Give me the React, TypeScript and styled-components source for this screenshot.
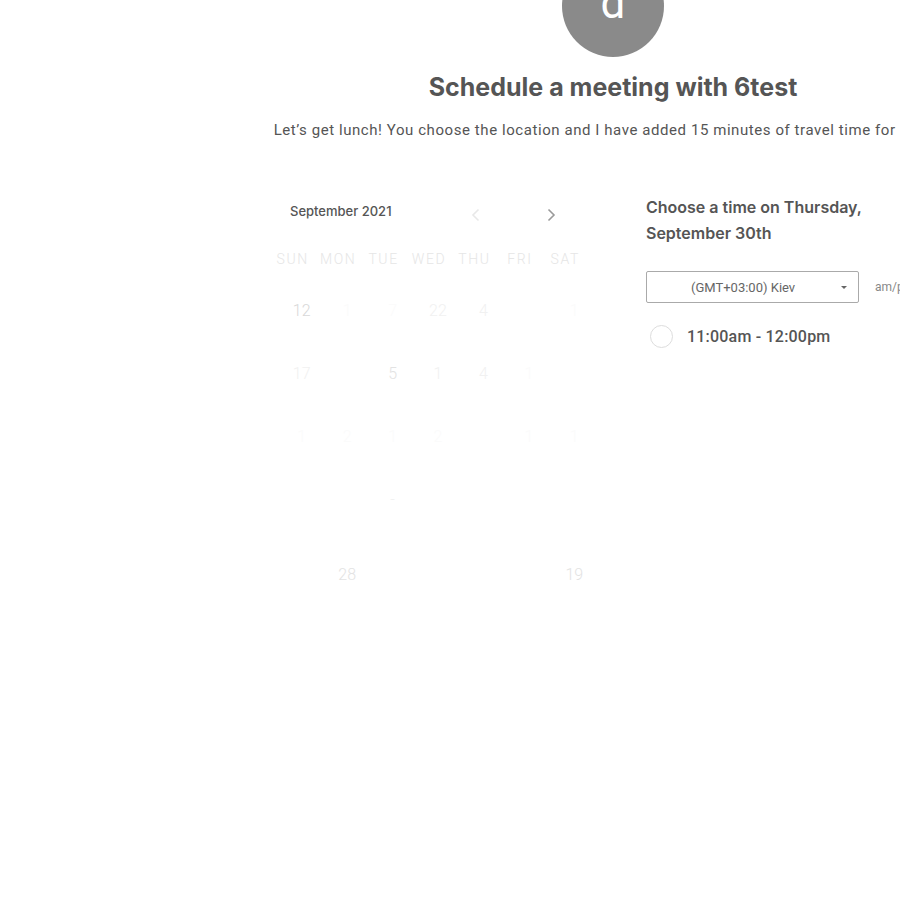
import React from "react";
import styled, { createGlobalStyle } from "styled-components";

const Global = createGlobalStyle`
  html, body { margin: 0; padding: 0; background: #fff; overflow: hidden; }
  body { font-family: Roboto, "Liberation Sans", sans-serif; color: #555; }
`;

const Page = styled.div`
  width: 900px;
  height: 900px;
  overflow: hidden;
  padding-left: 270px;
  box-sizing: border-box;
`;

const Container = styled.div`
  width: 686px;
  display: flex;
  flex-direction: column;
  align-items: center;
`;

const Avatar = styled.div`
  width: 102px;
  height: 102px;
  border-radius: 50%;
  background: #8a8a8a;
  margin-top: -45px;
  display: flex;
  align-items: center;
  justify-content: center;
  color: #fff;
  font-family: Roboto, sans-serif;
  font-size: 44px;
  line-height: 1;
`;

const AvatarLetter = styled.span`
  transform: translateY(-3px);
`;

const Title = styled.h1`
  margin: 15px 0 0;
  font-family: Inter, Roboto, sans-serif;
  font-weight: 700;
  font-size: 25px;
  line-height: 30px;
  color: #555;
`;

const Subtitle = styled.p`
  margin: 18px 0 0;
  white-space: nowrap;
  font-size: 15px;
  letter-spacing: 0.57px;
  line-height: 20px;
  color: #555;
  text-align: center;
`;

const Body = styled.div`
  align-self: stretch;
  display: flex;
  margin-top: 55px;
`;

const Calendar = styled.div`
  width: 318px;
  flex: none;
  padding-top: 4px;
`;

const MonthBar = styled.div`
  display: flex;
  align-items: center;
  padding-left: 20px;
  height: 24px;
`;

const MonthLabel = styled.div`
  flex: none;
  font-family: Inter, Roboto, sans-serif;
  font-size: 13px;
  font-weight: 500;
  color: #555;
  width: 176px;
`;

const NavButton = styled.button<{ $faded?: boolean }>`
  flex: none;
  border: 0;
  background: none;
  padding: 0;
  width: 20px;
  height: 20px;
  margin-top: 8px;
  display: flex;
  align-items: center;
  justify-content: center;
  color: ${(p) => (p.$faded ? "#e8e8e8" : "#9a9a9a")};
  margin-right: ${(p) => (p.$faded ? "55px" : "0")};
`;

const WeekHeader = styled.div`
  display: grid;
  grid-template-columns: repeat(7, 1fr);
  margin-top: 26px;
  height: 20px;
  align-items: center;
`;

const WeekDay = styled.div`
  text-align: center;
  font-size: 14px;
  font-weight: 300;
  letter-spacing: 1.6px;
  color: #e6e6e6;
`;

const DayGrid = styled.div`
  display: grid;
  grid-template-columns: repeat(7, 1fr);
  grid-template-rows: 63px 63px 63px 63px 75px;
  margin-top: 10px;
`;

const Day = styled.div<{ $tone: number }>`
  display: flex;
  align-items: flex-end;
  justify-content: center;
  padding-left: 18px;
  padding-bottom: 22px;
  font-size: 16px;
  font-weight: 300;
  color: ${(p) => ["#fbfbfb", "#f1f1f1", "#e3e3e3", "#d8d8d8"][p.$tone]};
`;

const Times = styled.div`
  margin-left: 58px;
  margin-top: -1px;
  display: flex;
  flex-direction: column;
`;

const TimeHeading = styled.h2`
  margin: 0;
  font-family: Inter, Roboto, sans-serif;
  font-weight: 600;
  font-size: 16px;
  line-height: 26px;
  color: #555;
  width: 240px;
`;

const ZoneRow = styled.div`
  display: flex;
  align-items: center;
  margin-top: 25px;
  gap: 16px;
`;

const ZoneSelect = styled.div`
  width: 213px;
  height: 32px;
  box-sizing: border-box;
  border: 1px solid #aaa;
  border-radius: 2px;
  display: flex;
  align-items: center;
  position: relative;
  font-size: 13px;
  color: #666;
  padding-left: 44px;
`;

const Caret = styled.span`
  position: absolute;
  right: 11px;
  top: 14px;
  width: 0;
  height: 0;
  border-left: 3px solid transparent;
  border-right: 3px solid transparent;
  border-top: 3px solid #666;
`;

const Format = styled.span`
  font-size: 12px;
  color: #888;
  white-space: nowrap;
`;

const Slot = styled.label`
  display: flex;
  align-items: center;
  margin-top: 22px;
  margin-left: 4px;
  gap: 14px;
  font-size: 16px;
  font-weight: 500;
  letter-spacing: 0.2px;
  color: #555;
`;

const Radio = styled.span`
  width: 21px;
  height: 21px;
  border-radius: 50%;
  border: 1px solid #ddd;
`;

const weekdays = ["SUN", "MON", "TUE", "WED", "THU", "FRI", "SAT"];
const days: [string, number][] = [
  ["12", 3], ["1", 0], ["7", 0], ["22", 1], ["4", 1], ["", 0], ["1", 0],
  ["17", 1], ["", 0], ["5", 2], ["1", 1], ["4", 1], ["1", 0], ["", 0],
  ["1", 0], ["2", 0], ["1", 0], ["2", 0], ["", 0], ["1", 0], ["1", 0],
  ["", 0], ["", 0], ["-", 1], ["", 0], ["", 0], ["", 0], ["", 0],
  ["", 0], ["28", 2], ["", 0], ["", 0], ["", 0], ["", 0], ["19", 2],
];

const Chevron = ({ dir }: { dir: "l" | "r" }) => (
  <svg width="10" height="14" viewBox="0 0 10 14" fill="none">
    <path
      d={dir === "r" ? "M2.5 1.5L8 7L2.5 12.5" : "M7.5 1.5L2 7L7.5 12.5"}
      stroke="currentColor"
      strokeWidth="1.6"
    />
  </svg>
);

export default function App() {
  return (
    <Page>
      <Global />
      <Container>
        <Avatar>
          <AvatarLetter>d</AvatarLetter>
        </Avatar>
        <Title>Schedule a meeting with 6test</Title>
        <Subtitle>
          Let’s get lunch! You choose the location and I have added 15 minutes of travel time for us two.
        </Subtitle>
        <Body>
          <Calendar>
            <MonthBar>
              <MonthLabel>September 2021</MonthLabel>
              <NavButton $faded>
                <Chevron dir="l" />
              </NavButton>
              <NavButton>
                <Chevron dir="r" />
              </NavButton>
            </MonthBar>
            <WeekHeader>
              {weekdays.map((w) => (
                <WeekDay key={w}>{w}</WeekDay>
              ))}
            </WeekHeader>
            <DayGrid>
              {days.map(([d, t], i) => (
                <Day key={i} $tone={t}>
                  {d}
                </Day>
              ))}
            </DayGrid>
          </Calendar>
          <Times>
            <TimeHeading>Choose a time on Thursday, September 30th</TimeHeading>
            <ZoneRow>
              <ZoneSelect>
                (GMT+03:00) Kiev
                <Caret />
              </ZoneSelect>
              <Format>am/pm</Format>
            </ZoneRow>
            <Slot>
              <Radio />
              11:00am - 12:00pm
            </Slot>
          </Times>
        </Body>
      </Container>
    </Page>
  );
}
